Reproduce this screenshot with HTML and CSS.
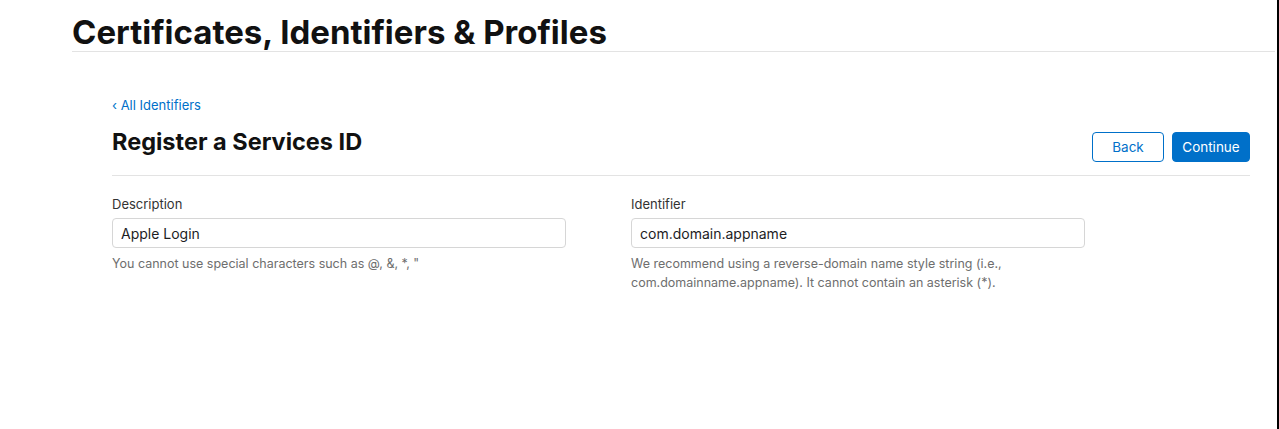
FILE: index.html
```html
<!DOCTYPE html>
<html lang="en">
<head>
<meta charset="utf-8">
<title>Register a Services ID</title>
<link rel="stylesheet" href="styles.css">
</head>
<body>
<div class="frame">
  <header class="page-header">
    <h1 class="page-title">Certificates, Identifiers &amp; Profiles</h1>
  </header>
  <main class="content">
    <a class="back-link" href="#">&lsaquo; All Identifiers</a>
    <div class="title-row">
      <h2 class="section-title">Register a Services ID</h2>
      <div class="actions">
        <button class="btn btn-secondary" type="button">Back</button>
        <button class="btn btn-primary" type="button">Continue</button>
      </div>
    </div>
    <div class="form-grid">
      <div class="field">
        <label class="field-label">Description</label>
        <input class="field-input" type="text" value="Apple Login">
        <p class="field-help">You cannot use special characters such as @, &amp;, *, "</p>
      </div>
      <div class="field">
        <label class="field-label">Identifier</label>
        <input class="field-input" type="text" value="com.domain.appname">
        <p class="field-help">We recommend using a reverse-domain name style string (i.e., com.domainname.appname). It cannot contain an asterisk (*).</p>
      </div>
    </div>
  </main>
</div>
</body>
</html>
```

FILE: styles.css
```css
* { box-sizing: border-box; }
html, body { margin: 0; padding: 0; background: #fff; }
body {
  font-family: Inter, "Noto Sans", "Liberation Sans", sans-serif;
  color: #1d1d1f;
}
.frame {
  width: 1279px;
  height: 429px;
  border-right: 2px solid #000;
  overflow: hidden;
}
.page-header {
  margin-left: 72px;
  margin-right: 2px;
  border-bottom: 1px solid #e3e3e3;
  height: 52px;
  padding-top: 14px;
}
.page-title {
  margin: 0;
  font-size: 33px;
  line-height: 36px;
  font-weight: 700;
  letter-spacing: 0;
  color: #111;
}
.content {
  margin-left: 112px;
  width: 1138px;
  padding-top: 45px;
}
.back-link {
  display: block;
  font-size: 13px;
  line-height: 16px;
  color: #0070c9;
  text-decoration: none;
}
.title-row {
  display: flex;
  justify-content: space-between;
  align-items: flex-start;
  margin-top: 14px;
  padding-bottom: 13px;
  border-bottom: 1px solid #e3e3e3;
}
.section-title {
  margin: 0;
  font-size: 23.5px;
  line-height: 30px;
  font-weight: 700;
  color: #111;
}
.actions {
  display: flex;
  gap: 8px;
  padding-top: 5px;
}
.btn {
  font-family: inherit;
  font-size: 13.5px;
  height: 30px;
  border-radius: 4px;
  padding: 0;
  cursor: pointer;
}
.btn-secondary {
  width: 72px;
  background: #fff;
  color: #0070c9;
  border: 1px solid #0070c9;
}
.btn-primary {
  width: 78px;
  background: #0070c9;
  color: #fff;
  border: 1px solid #0070c9;
}
.form-grid {
  display: grid;
  grid-template-columns: 519px 519px;
  padding-top: 19px;
}
.field { display: flex; flex-direction: column; }
.field-label {
  font-size: 13px;
  line-height: 18px;
  color: #333;
  margin-bottom: 5px;
}
.field-input {
  width: 454px;
  height: 30px;
  border: 1px solid #d6d6d6;
  border-radius: 4px;
  padding: 0 8px;
  font-family: inherit;
  font-size: 14px;
  color: #1d1d1f;
  background: #fff;
}
.field-help {
  margin: 6px 0 0;
  width: 454px;
  font-size: 12.5px;
  line-height: 19px;
  color: #6e6e6e;
}
```
